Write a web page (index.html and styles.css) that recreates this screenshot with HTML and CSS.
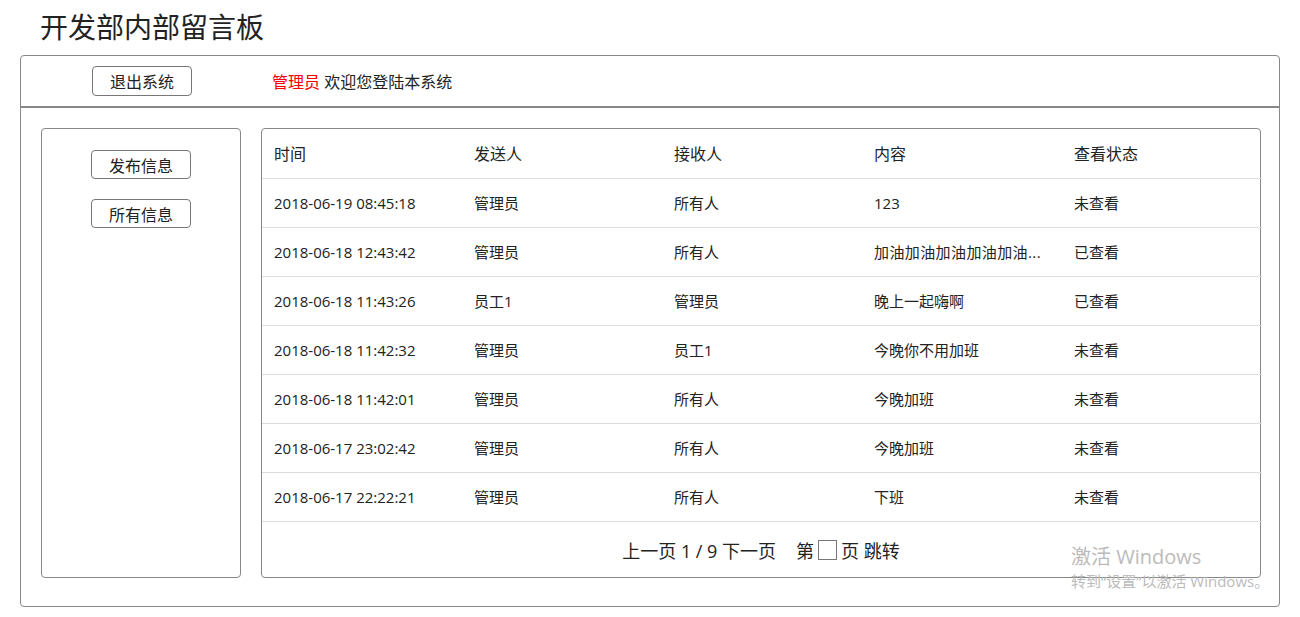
FILE: index.html
```html
<!DOCTYPE html>
<html lang="zh-CN">
<head>
    <meta charset="UTF-8">
    <title>开发部内部留言板</title>
    <link rel="stylesheet" href="styles.css">
</head>
<body>
    <h1 class="title">开发部内部留言板</h1>
    <div class="main">
        <div class="topbar">
            <div class="topbar-left">
                <button class="btn">退出系统</button>
            </div>
            <div class="welcome"><span class="user">管理员</span> 欢迎您登陆本系统</div>
        </div>
        <div class="content">
            <div class="sidebar">
                <button class="btn">发布信息</button>
                <button class="btn">所有信息</button>
            </div>
            <div class="panel">
                <table class="msg-table">
                    <thead>
                        <tr><th>时间</th><th>发送人</th><th>接收人</th><th>内容</th><th>查看状态</th></tr>
                    </thead>
                    <tbody>
                        <tr><td>2018-06-19 08:45:18</td><td>管理员</td><td>所有人</td><td>123</td><td>未查看</td></tr>
                        <tr><td>2018-06-18 12:43:42</td><td>管理员</td><td>所有人</td><td class="long">加油加油加油加油加油...</td><td>已查看</td></tr>
                        <tr><td>2018-06-18 11:43:26</td><td>员工1</td><td>管理员</td><td>晚上一起嗨啊</td><td>已查看</td></tr>
                        <tr><td>2018-06-18 11:42:32</td><td>管理员</td><td>员工1</td><td>今晚你不用加班</td><td>未查看</td></tr>
                        <tr><td>2018-06-18 11:42:01</td><td>管理员</td><td>所有人</td><td>今晚加班</td><td>未查看</td></tr>
                        <tr><td>2018-06-17 23:02:42</td><td>管理员</td><td>所有人</td><td>今晚加班</td><td>未查看</td></tr>
                        <tr><td>2018-06-17 22:22:21</td><td>管理员</td><td>所有人</td><td>下班</td><td>未查看</td></tr>
                    </tbody>
                </table>
                <div class="pager">
                    <span>上一页 1 / 9 下一页</span>
                    <span class="jump">第 <input class="page-input" type="text"> 页 跳转</span>
                </div>
            </div>
        </div>
    </div>
    <div class="watermark">
        <div class="wm-big">激活 Windows</div>
        <div class="wm-small">转到“设置”以激活 Windows。</div>
    </div>
</body>
</html>
```

FILE: styles.css
```css
body {
    margin: 0;
    padding: 0 20px;
    font-family: "Open Sans", "Noto Sans CJK SC", sans-serif;
    color: #333;
    background: #fff;
}

.title {
    margin: 0;
    padding-left: 20px;
    height: 55px;
    line-height: 55px;
    font-size: 28px;
    font-weight: normal;
    color: #222;
}

.main {
    width: 1258px;
    border: 1px solid #888;
    border-radius: 4px;
}

.topbar {
    display: flex;
    align-items: center;
    height: 50px;
    border-bottom: 2px solid #888;
}

.topbar-left {
    width: 242px;
    display: flex;
    justify-content: center;
}

.welcome {
    margin-left: 9px;
    font-size: 16px;
    color: #222;
}

.user {
    color: #f00;
}

.btn {
    width: 100px;
    height: 30px;
    padding: 0;
    background: #fff;
    border: 1px solid #777;
    border-radius: 4px;
    font-family: inherit;
    font-size: 16px;
    color: #222;
    cursor: pointer;
}

.content {
    display: flex;
    gap: 20px;
    padding: 20px 20px 28px;
}

.sidebar {
    flex-shrink: 0;
    width: 198px;
    height: 427px;
    border: 1px solid #888;
    border-radius: 4px;
    display: flex;
    flex-direction: column;
    align-items: center;
    gap: 20px;
    padding-top: 21px;
}

.sidebar .btn {
    height: 29px;
}

.panel {
    flex-shrink: 0;
    width: 998px;
    height: 448px;
    border: 1px solid #888;
    border-radius: 4px;
    display: flex;
    flex-direction: column;
}

.msg-table {
    width: 100%;
    border-collapse: collapse;
    table-layout: fixed;
    font-size: 15px;
}

.msg-table th,
.msg-table td {
    box-sizing: border-box;
    width: 200px;
    height: 49px;
    padding: 0 0 0 12px;
    text-align: left;
    font-weight: normal;
    border-bottom: 1px solid #ddd;
    white-space: nowrap;
    overflow: hidden;
    color: #222;
}

.msg-table th {
    font-size: 16px;
}

.msg-table td.long {
    letter-spacing: 0.4px;
}

.pager {
    flex: 1;
    display: flex;
    justify-content: center;
    align-items: center;
    gap: 20px;
    font-size: 18px;
    color: #222;
    padding-top: 2px;
}

.jump {
    display: flex;
    align-items: center;
    gap: 4px;
}

.page-input {
    width: 17px;
    height: 18px;
    padding: 0;
    border: 1px solid #777;
    margin: 0;
}

.watermark {
    position: absolute;
    left: 1071px;
    top: 544px;
    color: #bbb;
}

.wm-big {
    font-size: 20px;
    line-height: 26px;
}

.wm-small {
    font-size: 15px;
    line-height: 22px;
}
```
